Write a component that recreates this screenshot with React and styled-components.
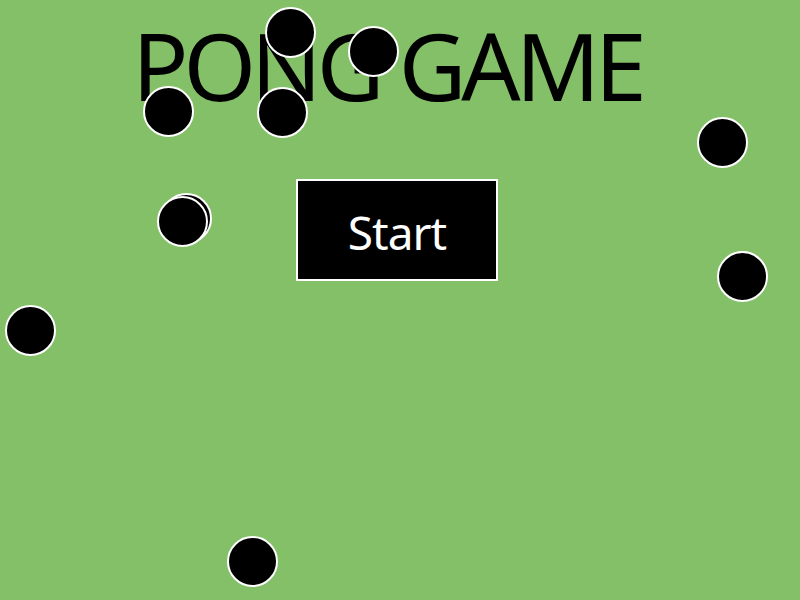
import React from "react";
import styled, { createGlobalStyle } from "styled-components";

const GlobalStyle = createGlobalStyle`
  html, body {
    margin: 0;
    padding: 0;
    height: 100%;
    overflow: hidden;
  }
  #root {
    height: 100%;
  }
`;

const balls = [
  { x: 265, y: 7 },
  { x: 348, y: 26 },
  { x: 143, y: 86 },
  { x: 257, y: 87 },
  { x: 697, y: 117 },
  { x: 161, y: 193 },
  { x: 157, y: 196 },
  { x: 717, y: 251 },
  { x: 5, y: 305 },
  { x: 227, y: 536 },
];

const App = () => {
  return (
    <Cancha>
      <GlobalStyle />
      <Titulo>PONG GAME</Titulo>
      <BotonInicio>Start</BotonInicio>
      {balls.map((b, i) => (
        <Pelota key={i} style={{ left: b.x, top: b.y }} />
      ))}
    </Cancha>
  );
};

export default App;

const Cancha = styled.div`
  position: relative;
  width: 100%;
  height: 100%;
  background: #84c068;
  display: flex;
  flex-direction: column;
  align-items: center;
  font-family: "Noto Sans", sans-serif;
  overflow: hidden;
`;

const Titulo = styled.h1`
  margin: 10px 0 0 0;
  padding-right: 26px;
  font-size: 93px;
  font-weight: 400;
  letter-spacing: -5px;
  line-height: 110px;
  color: #000;
`;

const BotonInicio = styled.button`
  margin: 59px 6px 0 0;
  padding: 4px 0 0 0;
  width: 202px;
  height: 102px;
  background: #000;
  color: #fff;
  border: 2px solid #fff;
  font-family: "Noto Sans", sans-serif;
  font-size: 46px;
  letter-spacing: -1px;
  cursor: pointer;
`;

const Pelota = styled.div`
  position: absolute;
  width: 51px;
  height: 51px;
  box-sizing: border-box;
  border-radius: 50%;
  background: #000;
  border: 2px solid #fff;
`;
